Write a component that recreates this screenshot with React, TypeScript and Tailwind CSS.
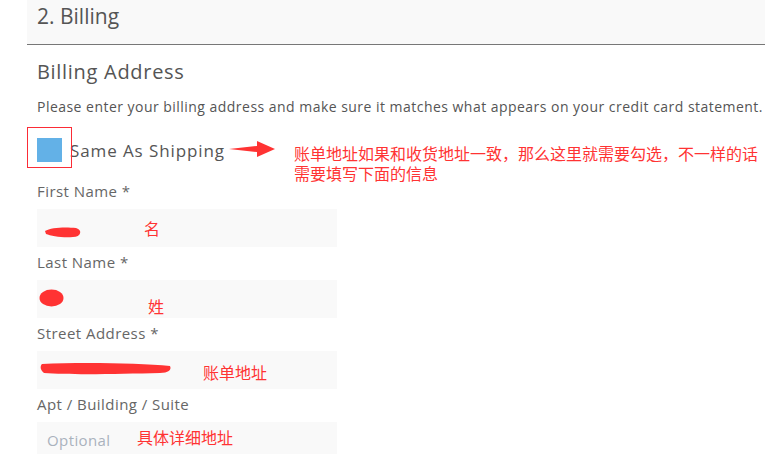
const font = { fontFamily: '"Open Sans", "Noto Sans CJK SC", sans-serif' };

function Field({ label, children }: { label: string; children?: React.ReactNode }) {
  return (
    <div className="flex flex-col">
      <label className="h-[18px] text-[15px] leading-[18px] tracking-[0.45px] text-[#666]">{label}</label>
      <div className="relative mt-[9px] flex h-[38px] w-[300px] items-center bg-[#f9f9f9]">{children}</div>
    </div>
  );
}

const note = "absolute text-[16px] leading-[20px] text-[#ff3333] tracking-normal";

export default function App() {
  return (
    <div className="h-[454px] w-[765px] overflow-hidden bg-white" style={font}>
      <div className="ml-[27px] flex h-[45px] items-center border-b border-[#777] bg-[#f9f9f9] pl-[10px]">
        <h2 className="-mt-[10px] text-[21px] text-[#555]">2. Billing</h2>
      </div>
      <div className="pl-[37px]">
        <h3 className="mt-[14px] text-[20px] leading-[26px] tracking-[0.7px] text-[#555]">Billing Address</h3>
        <p className="mt-[12px] text-[14px] leading-[20px] tracking-[0.47px] text-[#555]">
          Please enter your billing address and make sure it matches what appears on your credit card statement.
        </p>
        <div className="mt-[10px] flex h-[41px] items-start">
          <div className="relative mt-[11px] h-[24px] w-[25px] shrink-0 bg-[#63b1e7]">
            <div className="absolute -left-[10px] -top-[11px] h-[41px] w-[45px] border border-solid border-red-500" />
          </div>
          <span className="ml-[8px] mt-[13px] whitespace-nowrap text-[17px] leading-[22px] tracking-[0.9px] text-[#555]">
            Same As Shipping
          </span>
          <svg className="ml-[4px] mt-[14px] shrink-0" width="46" height="16" viewBox="0 0 46 16">
            <polygon points="0,8 28,5 28,0 46,8 28,16 28,11" fill="#ff3333" />
          </svg>
          <div className="ml-[19px] mt-[17px] whitespace-nowrap text-[16px] leading-[20px] text-[#ff3333]">
            账单地址如果和收货地址一致，那么这里就需要勾选，不一样的话
            <br />
            需要填写下面的信息
          </div>
        </div>
        <div className="mt-[14px] flex flex-col gap-[6px]">
          <Field label="First Name *">
            <svg className="ml-[6px] mt-[8px]" width="40" height="14" viewBox="0 0 40 14">
              <path d="M2 6 C8 2 24 2 33 3 C40 5 38 12 30 12 C20 13 8 11 3 9 Z" fill="#ff3333" />
            </svg>
            <span className={note + " left-[107px] top-[10px]"}>名</span>
          </Field>
          <Field label="Last Name *">
            <svg className="ml-[2px] -mt-[2px]" width="26" height="18" viewBox="0 0 26 18">
              <ellipse cx="12.5" cy="9" rx="12" ry="8.5" fill="#ff3333" />
            </svg>
            <span className={note + " left-[111px] top-[17px]"}>姓</span>
          </Field>
          <Field label="Street Address *">
            <svg className="ml-[3px] -mt-[2px]" width="132" height="16" viewBox="0 0 132 16">
              <path d="M2 3 C40 1 100 2 130 5 C132 9 128 12 120 12 C80 13 30 14 4 12 C0 9 0 5 2 3 Z" fill="#ff3333" />
            </svg>
            <span className={note + " left-[166px] top-[12px]"}>账单地址</span>
          </Field>
          <Field label="Apt / Building / Suite">
            <span className="ml-[10px] -mt-[3px] text-[15px] leading-[20px] tracking-[0.4px] text-[#aab2bd]">Optional</span>
            <span className={note + " left-[100px] top-[6px]"}>具体详细地址</span>
          </Field>
        </div>
      </div>
    </div>
  );
}
